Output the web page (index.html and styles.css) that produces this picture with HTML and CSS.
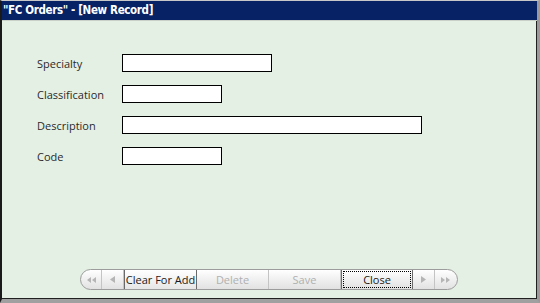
FILE: index.html
```html
<!DOCTYPE html>
<html>
<head>
<meta charset="utf-8">
<link rel="stylesheet" href="styles.css">
</head>
<body>
<div class="window">
  <div class="titlebar">"FC Orders" - [New Record]</div>
  <div class="content">
    <div class="form">
      <div class="row"><span class="label">Specialty</span><span class="field w150"></span></div>
      <div class="row"><span class="label">Classification</span><span class="field w100"></span></div>
      <div class="row"><span class="label">Description</span><span class="field w300"></span></div>
      <div class="row"><span class="label">Code</span><span class="field w100"></span></div>
    </div>
    <div class="navwrap">
      <div class="navbar">
        <div class="seg arrow first"><svg width="10" height="6" viewBox="0 0 10 6"><path d="M4 0L0 3L4 6ZM9 0L5 3L9 6Z" fill="#b5b5b5"/></svg></div>
        <div class="seg arrow"><svg width="5" height="7" viewBox="0 0 5 7"><path d="M5 0L0 3.5L5 7Z" fill="#b5b5b5"/></svg></div>
        <div class="seg btn active">Clear For Add</div>
        <div class="seg btn disabled">Delete</div>
        <div class="seg btn disabled">Save</div>
        <div class="seg btn focus"><span class="focusring">Close</span></div>
        <div class="seg arrow"><svg width="5" height="7" viewBox="0 0 5 7"><path d="M0 0L5 3.5L0 7Z" fill="#b5b5b5"/></svg></div>
        <div class="seg arrow last"><svg width="10" height="6" viewBox="0 0 10 6"><path d="M1 0L5 3L1 6ZM6 0L10 3L6 6Z" fill="#b5b5b5"/></svg></div>
      </div>
    </div>
  </div>
</div>
</body>
</html>
```
FILE: styles.css
```css
html, body {
  margin: 0;
  padding: 0;
  background: #e5f0e4;
}
.window {
  width: 540px;
  height: 303px;
  box-sizing: border-box;
  border-top: 1px solid #c8c8c8;
  border-left: 2px solid #1a1a1a;
  border-right: 3px solid #9a9a9a;
  border-bottom: 4px solid #a0a0a0;
  display: flex;
  flex-direction: column;
  background: #e5f0e4;
  box-shadow: inset -1px -1px 0 #202020;
}
.titlebar {
  height: 19px;
  background: #082266;
  color: #ffffff;
  font-family: "DejaVu Sans Condensed", "DejaVu Sans", sans-serif;
  font-weight: bold;
  font-size: 11.5px;
  letter-spacing: -0.35px;
  line-height: 19px;
  padding-left: 1px;
  border-bottom: 1px solid #c8d0c8;
  white-space: nowrap;
}
.content {
  flex: 1;
  display: flex;
  flex-direction: column;
}
.form {
  padding-top: 33px;
  padding-left: 35px;
  display: flex;
  flex-direction: column;
  gap: 13px;
}
.row {
  display: flex;
  align-items: center;
  height: 18px;
}
.label {
  width: 85px;
  font-family: "Open Sans", "Segoe UI", sans-serif;
  font-size: 11px;
  color: #2a2a2a;
}
.field {
  height: 18px;
  box-sizing: border-box;
  border: 1px solid #000;
  background: #fff;
}
.w150 { width: 150px; }
.w100 { width: 100px; }
.w300 { width: 300px; }
.navwrap {
  margin-top: auto;
  margin-bottom: 9px;
  padding-left: 78px;
  display: flex;
}
.navbar {
  display: flex;
  height: 21px;
  box-sizing: border-box;
  border: 1px solid #9c9c9c;
  border-radius: 11px;
  background: linear-gradient(#ffffff, #f0f0f0 50%, #e2e2e2);
  overflow: hidden;
}
.seg {
  display: flex;
  align-items: center;
  justify-content: center;
  height: 100%;
  box-sizing: border-box;
  border-right: 1px solid #c4c4c4;
  font-family: "Open Sans", "Segoe UI", sans-serif;
  font-size: 11px;
  color: #1a1a1a;
}
.seg:last-child { border-right: none; }
.arrow { width: 22px; }
.arrow.first { width: 21px; padding-left: 2px; }
.arrow.last { width: 22px; padding-right: 2px; }
.btn { width: 72px; }
.btn.active {
  width: 73px;
  border: 1px solid #6a6a6a;
  margin-top: -1px;
  height: 21px;
  background: linear-gradient(#ffffff, #f3f3f3 50%, #e6e6e6);
}
.btn.disabled { color: #b0b0b0; }
.btn.focus {
  border: 1px solid #6a6a6a;
  margin-top: -1px;
  height: 21px;
  padding: 1px;
}
.focusring {
  flex: 1;
  align-self: stretch;
  display: flex;
  align-items: center;
  justify-content: center;
  border: 1px dotted #000;
}
```
